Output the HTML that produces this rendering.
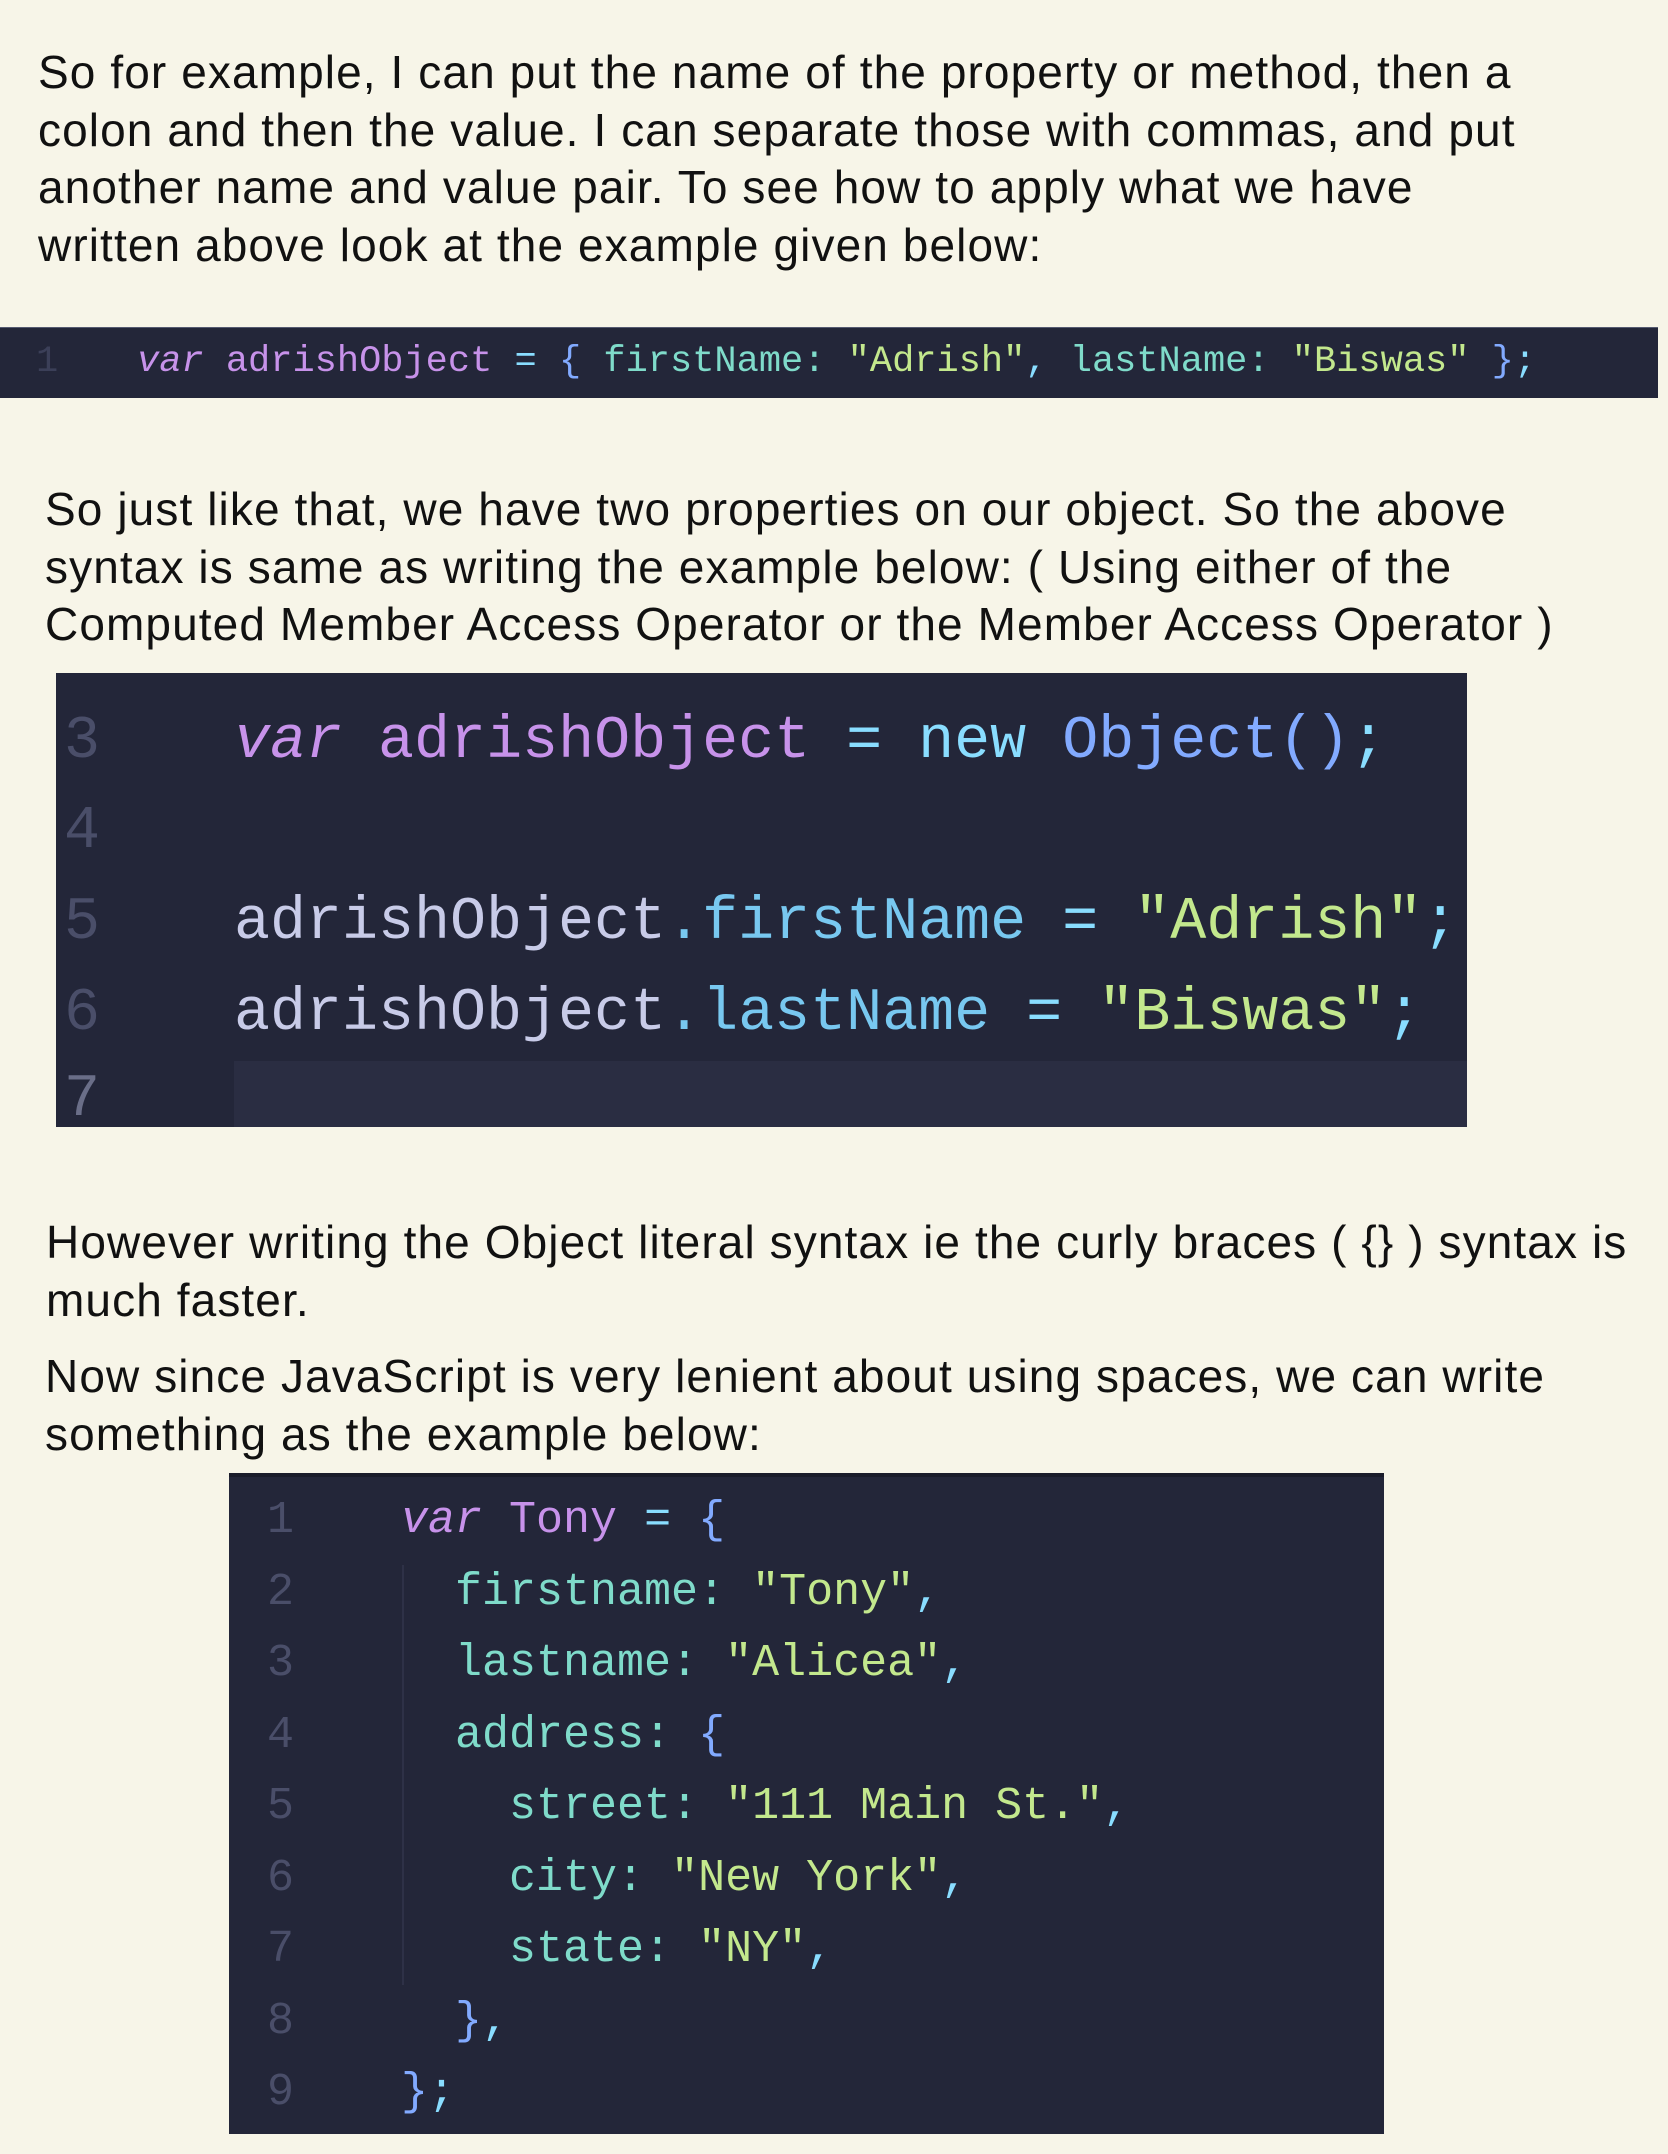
<!DOCTYPE html>
<html><head><meta charset="utf-8"><style>
html,body{margin:0;padding:0}
body{width:1668px;height:2154px;background:#f7f5e8;position:relative;overflow:hidden;font-family:"Liberation Sans",Arial,sans-serif;color:#111}
.p{position:absolute;font-size:46px;line-height:57.5px;white-space:nowrap;letter-spacing:1.1px}
.code{position:absolute;background:#232639;font-family:"Liberation Mono","DejaVu Sans Mono",monospace;white-space:pre}
.ln{position:absolute;color:#4a4e69}
.l{position:absolute}
.v{color:#c792ea;font-style:italic}
.id{color:#c792ea}
.op{color:#89ddff}
.br{color:#82aaff}
.pr{color:#7fdbca}
.s{color:#c3e88d}
.pl{color:#c8cbe8}
.pc{color:#78c8f0}
</style></head><body>
<div class="p" style="left:38px;top:44px">So for example, I can put the name of the property or method, then a<br>colon and then the value. I can separate those with commas, and put<br>another name and value pair. To see how to apply what we have<br>written above look at the example given below:</div>

<div class="code" style="left:0;top:327px;width:1658px;height:70px;border-top:1px solid #555a70;font-size:37px;line-height:44px">
<span class="ln" style="left:36px;top:12px;color:#3b3f58">1</span>
<span class="l" style="left:137px;top:12px"><span class="v">var</span> <span class="id">adrishObject</span> <span class="op">=</span> <span class="br">{</span> <span class="pr">firstName:</span> <span class="s">"Adrish"</span><span class="op">,</span> <span class="pr">lastName:</span> <span class="s">"Biswas"</span> <span class="br">}</span><span class="op">;</span></span>
</div>

<div class="p" style="left:45px;top:481px">So just like that, we have two properties on our object. So the above<br>syntax is same as writing the example below: ( Using either of the<br>Computed Member Access Operator or the Member Access Operator )</div>

<div class="code" style="left:56px;top:673px;width:1411px;height:454px;font-size:60px;line-height:70px">
<div style="position:absolute;left:178px;top:388px;width:1233px;height:66px;background:#2a2d42"></div>
<span class="ln" style="left:8px;top:34px">3</span>
<span class="ln" style="left:8px;top:124px">4</span>
<span class="ln" style="left:8px;top:215px">5</span>
<span class="ln" style="left:8px;top:306px">6</span>
<span class="ln" style="left:8px;top:392px;color:#6a6e88">7</span>
<span class="l" style="left:178px;top:34px"><span class="v">var</span> <span class="id">adrishObject</span> <span class="op">=</span> <span class="op">new</span> <span class="br">Object()</span><span class="op">;</span></span>
<span class="l" style="left:178px;top:215px"><span class="pl">adrishObject</span><span class="pc">.firstName</span> <span class="op">=</span> <span class="s">"Adrish"</span><span class="op">;</span></span>
<span class="l" style="left:178px;top:306px"><span class="pl">adrishObject</span><span class="pc">.lastName</span> <span class="op">=</span> <span class="s">"Biswas"</span><span class="op">;</span></span>
</div>

<div class="p" style="left:46px;top:1214px">However writing the Object literal syntax ie the curly braces ( {} ) syntax is<br>much faster.</div>
<div class="p" style="left:45px;top:1348px">Now since JavaScript is very lenient about using spaces, we can write<br>something as the example below:</div>

<div class="code" style="left:229px;top:1473px;width:1155px;height:661px;font-size:45px;line-height:71.5px;border-top:4px solid #1a1c2a;box-sizing:border-box">
<div style="position:absolute;left:173px;top:88px;width:2px;height:420px;background:#2e3147"></div>
<span class="ln" style="left:38px;top:8px">1<br>2<br>3<br>4<br>5<br>6<br>7<br>8<br>9</span>
<div class="l" style="left:172px;top:8px"><span class="v">var</span> <span class="id">Tony</span> <span class="op">=</span> <span class="br">{</span>
  <span class="pr">firstname:</span> <span class="s">"Tony"</span><span class="op">,</span>
  <span class="pr">lastname:</span> <span class="s">"Alicea"</span><span class="op">,</span>
  <span class="pr">address:</span> <span class="br">{</span>
    <span class="pr">street:</span> <span class="s">"111 Main St."</span><span class="op">,</span>
    <span class="pr">city:</span> <span class="s">"New York"</span><span class="op">,</span>
    <span class="pr">state:</span> <span class="s">"NY"</span><span class="op">,</span>
  <span class="br">}</span><span class="op">,</span>
<span class="br">}</span><span class="op">;</span></div>
</div>
</body></html>
